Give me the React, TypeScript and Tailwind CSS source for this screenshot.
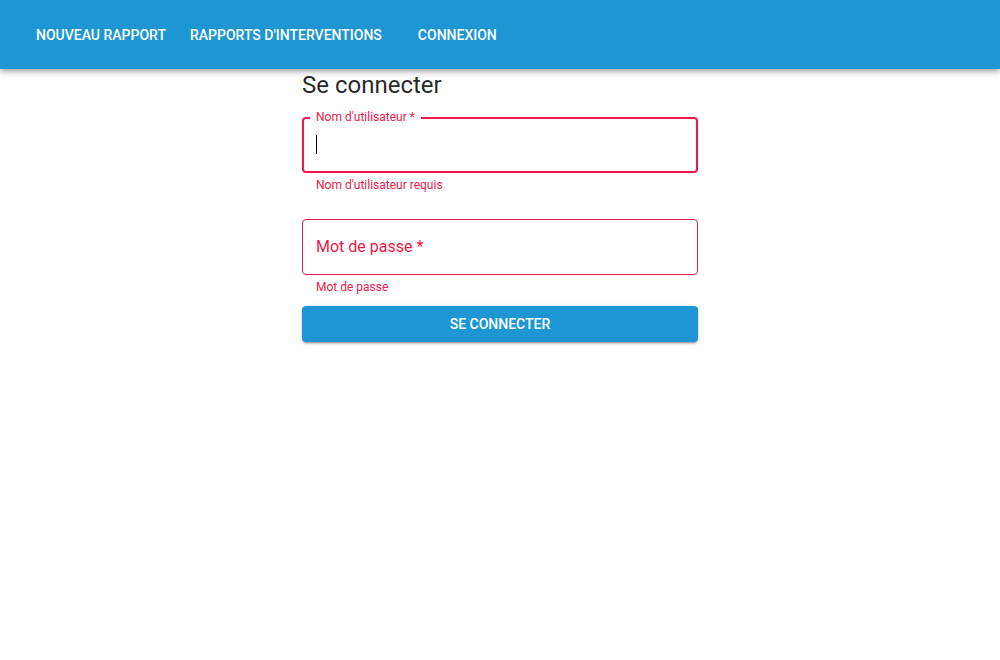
import React from "react";

const RED = "text-[#f0184a]";

function NavBar() {
  return (
    <header className="relative z-10 flex h-[69px] items-center bg-[#1d96d3] pl-[36px] pt-[1px] shadow-[0_2px_4px_-1px_rgba(0,0,0,0.2),0_4px_5px_0_rgba(0,0,0,0.14),0_1px_10px_0_rgba(0,0,0,0.12)]">
      <a className="text-[14px] font-medium uppercase text-white">Nouveau rapport</a>
      <a className="ml-[24px] text-[14px] font-medium uppercase text-white">Rapports d'interventions</a>
      <a className="ml-[36px] text-[14px] font-medium uppercase text-white">Connexion</a>
    </header>
  );
}

export default function App() {
  return (
    <div className="min-h-[660px] bg-white font-['Roboto',sans-serif]">
      <NavBar />
      <main className="mx-auto w-[396px]">
        <h1 className="text-[24px] leading-[32px] text-[rgba(0,0,0,0.87)]">Se connecter</h1>

        {/* Nom d'utilisateur (focused, error) */}
        <div className="mt-[16px] mb-[24px]">
          <div className="relative h-[56px] rounded-[4px] border-2 border-[#f0184a]">
            <span className={`absolute -top-[9px] left-[6px] bg-white px-[6px] text-[12px] leading-[14px] ${RED}`}>
              Nom d'utilisateur *
            </span>
            <div className="absolute left-[12px] top-[16px] h-[19px] w-[1px] bg-black" />
          </div>
          <p className={`ml-[14px] mt-[2px] text-[12px] leading-[20px] ${RED}`}>Nom d'utilisateur requis</p>
        </div>

        {/* Mot de passe (error) */}
        <div className="mb-[9px]">
          <div className="flex h-[56px] items-center rounded-[4px] border border-[#f0184a] px-[13px]">
            <span className={`text-[16px] ${RED}`}>Mot de passe *</span>
          </div>
          <p className={`ml-[14px] mt-[2px] text-[12px] leading-[20px] ${RED}`}>Mot de passe</p>
        </div>

        <button className="flex h-[36px] w-full items-center justify-center rounded-[4px] bg-[#1d96d3] text-[14px] font-medium uppercase text-white shadow-[0_3px_1px_-2px_rgba(0,0,0,0.2),0_2px_2px_0_rgba(0,0,0,0.14),0_1px_5px_0_rgba(0,0,0,0.12)]">
          Se connecter
        </button>
      </main>
    </div>
  );
}
